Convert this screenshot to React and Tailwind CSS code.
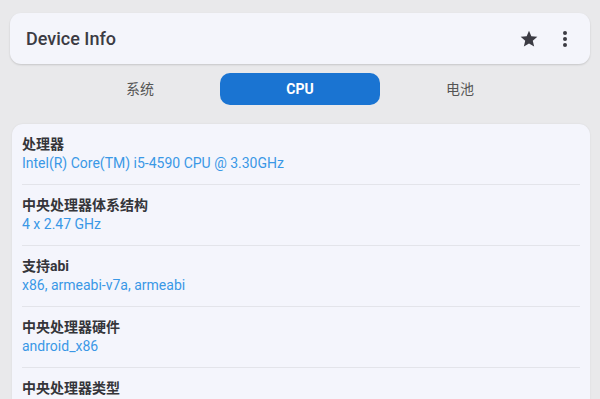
import React from "react";

const rows = [
  ["处理器", "Intel(R) Core(TM) i5-4590 CPU @ 3.30GHz"],
  ["中央处理器体系结构", "4 x 2.47 GHz"],
  ["支持abi", "x86, armeabi-v7a, armeabi"],
  ["中央处理器硬件", "android_x86"],
  ["中央处理器类型", null],
];

export default function App() {
  return (
    <div
      className="w-[600px] h-[399px] overflow-hidden bg-[#e9e9eb] flex flex-col"
      style={{ fontFamily: 'Roboto, "Noto Sans CJK SC", sans-serif' }}
    >
      <div className="shrink-0 mx-[10px] mt-[13px] h-[51px] rounded-[11px] bg-[#f4f5fb] shadow-[0_1px_2px_rgba(0,0,0,0.15)] flex items-center pl-4 pr-[22px]">
        <div className="flex-1 text-[18px] font-medium text-[#3b3b43]">Device Info</div>
        <svg width="20" height="20" viewBox="0 0 24 24" className="mr-[23px]">
          <path
            fill="#3b3b43"
            d="M12 17.27L18.18 21l-1.64-7.03L22 9.24l-7.19-.61L12 2 9.19 8.63 2 9.24l5.46 4.73L5.82 21z"
          />
        </svg>
        <svg width="6" height="18" viewBox="0 0 6 18">
          <circle cx="3" cy="3" r="2" fill="#3b3b43" />
          <circle cx="3" cy="9" r="2" fill="#3b3b43" />
          <circle cx="3" cy="15" r="2" fill="#3b3b43" />
        </svg>
      </div>

      <div className="shrink-0 mt-[9px] mx-auto w-[480px] grid grid-cols-3 h-[32px]">
        <div className="flex items-center justify-center text-[14px] text-[#555]">系统</div>
        <div className="flex items-center justify-center rounded-[10px] bg-[#1a74d2] text-white text-[14px] font-bold">
          CPU
        </div>
        <div className="flex items-center justify-center text-[14px] text-[#555]">电池</div>
      </div>

      <div className="shrink-0 mt-[19px] ml-[12px] mr-[10px] rounded-t-[11px] bg-[#f4f5fc] shadow-[0_0_2px_rgba(0,0,0,0.08)] px-[10px]">
        {rows.map(([label, value], i) => (
          <div key={i} className="pt-[10px] pb-[12px] border-b border-[#e3e4ea]">
            <div className="text-[14px] leading-[20px] font-bold text-[#35353a]">{label}</div>
            {value && <div className="text-[14px] leading-[18px] text-[#3a98e6]">{value}</div>}
          </div>
        ))}
      </div>
    </div>
  );
}
